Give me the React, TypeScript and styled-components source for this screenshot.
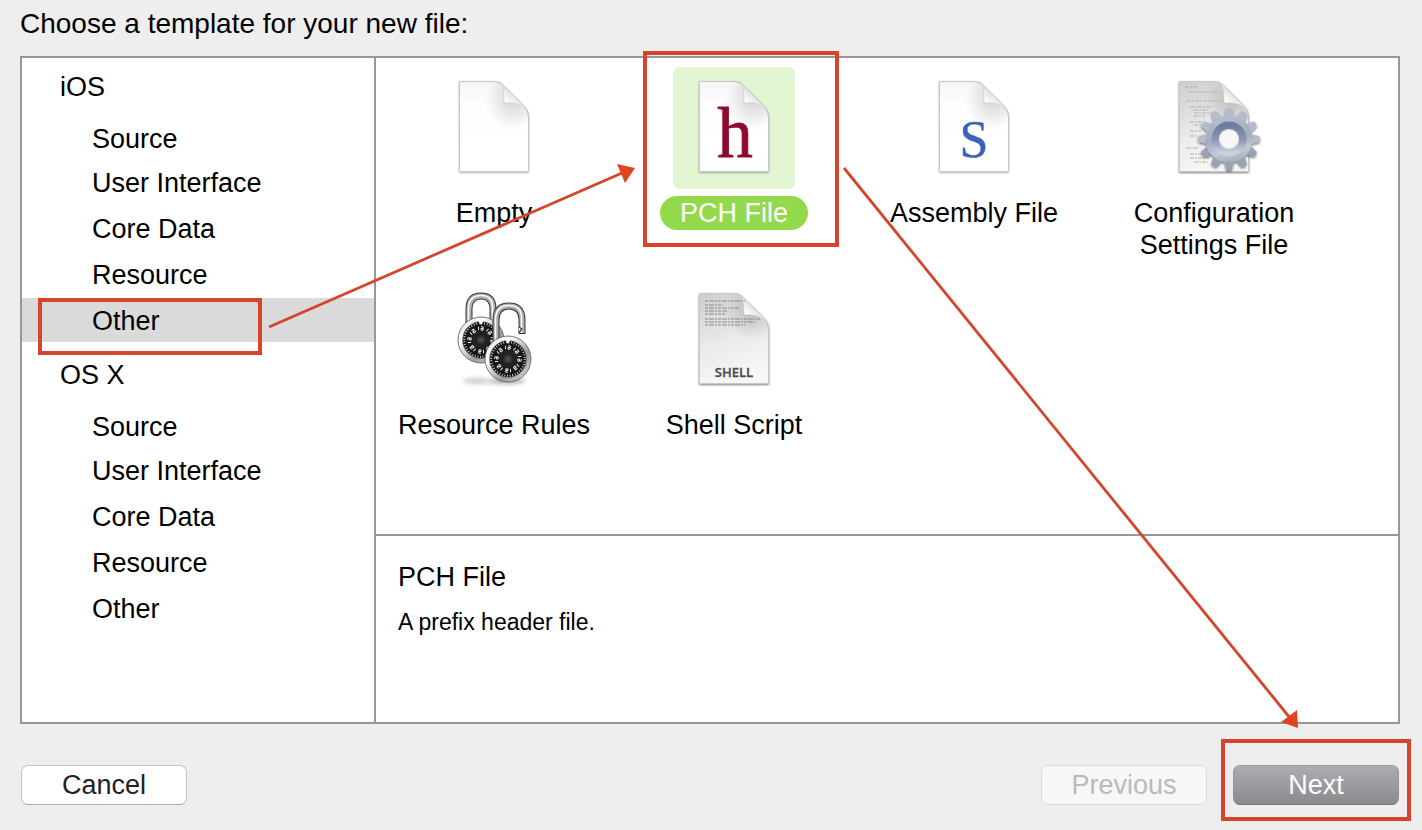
import React from "react";
import styled, { createGlobalStyle, css } from "styled-components";

const RED = "#d5452b";

const GlobalStyle = createGlobalStyle`
  *, *::before, *::after { box-sizing: border-box; }
  body {
    margin: 0;
    background: #eeeeee;
    color: #000;
    font-family: "Liberation Sans", Arial, sans-serif;
    font-size: 27px;
    line-height: 32px;
  }
  button { font: inherit; color: inherit; }
`;

const Sheet = styled.main`
  position: relative;
  display: flex;
  flex-direction: column;
  min-height: 100vh;
  padding: 0 22px 25px 20px;
  overflow: hidden;
`;

const Heading = styled.h1`
  margin: 0;
  padding: 8px 0 16px;
  font-size: 28px;
  font-weight: 400;
  line-height: 32px;
`;

const Panel = styled.div`
  display: flex;
  flex: 1;
  border: 2px solid #979797;
  background: #fff;
`;

const Sidebar = styled.nav`
  flex: none;
  width: 354px;
  border-right: 2px solid #979797;
`;

const Group = styled.section`
  & + & { margin-top: 4px; }
`;

const GroupTitle = styled.h2`
  margin: 0;
  padding-left: 38px;
  font-size: 27px;
  font-weight: 400;
  line-height: 58px;
`;

const List = styled.ul`
  margin: 0;
  padding: 0;
  list-style: none;
`;

const ListItem = styled.li`
  position: relative;
  & + & + & { margin-top: 2px; }
`;

const CategoryButton = styled.button<{ $selected: boolean }>`
  display: block;
  width: 100%;
  height: 44px;
  padding: 2px 0 0 70px;
  border: 0;
  background: ${(p) => (p.$selected ? "#dadada" : "transparent")};
  line-height: 42px;
  text-align: left;
`;

const Content = styled.div`
  display: flex;
  flex: 1;
  flex-direction: column;
  min-width: 0;
`;

const Templates = styled.div`
  display: grid;
  flex: 1;
  grid-template-columns: repeat(4, 236px);
  grid-auto-rows: 196px;
  align-content: start;
  gap: 16px 4px;
  padding: 9px 0;
`;

const Cell = styled.div`
  position: relative;
`;

const TemplateButton = styled.button`
  display: flex;
  flex-direction: column;
  align-items: center;
  gap: 7px;
  width: 100%;
  padding: 0;
  border: 0;
  background: none;
`;

const IconTile = styled.span<{ $selected: boolean }>`
  width: 122px;
  height: 122px;
  border-radius: 7px;
  background: ${(p) => (p.$selected ? "#e2f5d3" : "transparent")};
  svg { display: block; }
`;

const Label = styled.span<{ $selected: boolean }>`
  max-width: 196px;
  padding: 1px 0;
  ${(p) =>
    p.$selected &&
    css`
      padding: 1px 20px;
      border-radius: 17px;
      background: #92da4c;
      color: #fff;
    `}
`;

const Detail = styled.section`
  height: 188px;
  padding: 25px 22px;
  border-top: 2px solid #979797;
`;

const DetailTitle = styled.h2`
  margin: 0 0 15px;
  font-size: 27px;
  font-weight: 400;
  line-height: 32px;
`;

const DetailText = styled.p`
  margin: 0;
  font-size: 23px;
  line-height: 28px;
`;

const Footer = styled.footer`
  display: flex;
  justify-content: space-between;
  margin-top: 41px;
  padding: 0 1px;
`;

const Steps = styled.div`
  display: flex;
  gap: 26px;
`;

const Anchor = styled.div`
  position: relative;
`;

const PushButton = styled.button<{ $primary?: boolean }>`
  display: block;
  width: 166px;
  height: 40px;
  padding: 0;
  border: 1px solid #c3c3c3;
  border-bottom-color: #adadad;
  border-radius: 7px;
  background: #fff;
  color: #222;
  line-height: 36px;
  text-align: center;

  &:disabled {
    border-color: #d9d9d9;
    background: #f7f7f7;
    color: #bababa;
  }

  ${(p) =>
    p.$primary &&
    css`
      border-color: #9b9b9f #939397 #77777b;
      background: linear-gradient(#adadb2, #89898e);
      color: #fff;
    `}
`;

const Marker = styled.span<{ $inset: string }>`
  position: absolute;
  inset: ${(p) => p.$inset};
  z-index: 1;
  border: 4px solid ${RED};
  pointer-events: none;
`;

const Arrows = styled.svg`
  position: absolute;
  top: 0;
  left: 0;
  z-index: 2;
  pointer-events: none;
`;

const PAGE = "M26.5 14.5H60C66 14.5 70 18 75 23L88 36C93 41 95.5 44 95.5 51V104.5H26.5Z";

function Page({ id, grey = false, children }: { id: string; grey?: boolean; children?: React.ReactNode }) {
  return (
    <svg width="122" height="122" viewBox="0 0 122 122" aria-hidden="true">
      <defs>
        <linearGradient id={`${id}-paper`} x1="0" y1="0" x2={grey ? "0.3" : "0"} y2="1">
          <stop offset="0" stopColor={grey ? "#cdcdcd" : "#f4f4f4"} />
          <stop offset={grey ? "0.6" : "0.25"} stopColor={grey ? "#ebebeb" : "#fefefe"} />
          <stop offset="1" stopColor={grey ? "#f6f6f6" : "#ffffff"} />
        </linearGradient>
        <linearGradient id={`${id}-fold`} x1="0" y1="1" x2="0.6" y2="0.3">
          <stop offset="0" stopColor="#ffffff" />
          <stop offset="0.6" stopColor="#fafafa" />
          <stop offset="1" stopColor="#d4d4d4" />
        </linearGradient>
        <radialGradient id={`${id}-shade`} gradientUnits="userSpaceOnUse" cx="80" cy="34" r="28">
          <stop offset="0" stopColor="#000" stopOpacity="0.16" />
          <stop offset="1" stopColor="#000" stopOpacity="0" />
        </radialGradient>
        <filter id={`${id}-drop`} x="-10%" y="-10%" width="120%" height="120%">
          <feDropShadow dx="0" dy="1" stdDeviation="1" floodOpacity={grey ? "0.5" : "0.3"} />
        </filter>
      </defs>
      <path d={PAGE} fill={`url(#${id}-paper)`} stroke="#c8c8c8" filter={`url(#${id}-drop)`} />
      <path d={PAGE} fill={`url(#${id}-shade)`} />
      <path d="M64 14.5C70 16 71 24 71 36C83 35 92 38 95.5 48C94 42 91 39 88 36L75 23C70 18 68 15 64 14.5Z" fill={`url(#${id}-fold)`} stroke="#c4c4c4" strokeWidth="0.6" />
      {children}
    </svg>
  );
}

const EmptyIcon = () => <Page id="empty" />;

const HeaderIcon = () => (
  <Page id="pch">
    <text x="62" y="90" textAnchor="middle" fontFamily="Liberation Serif, serif" fontSize="71" fill="#8f0a2c" stroke="#8f0a2c" strokeWidth="0.8">h</text>
  </Page>
);

const AssemblyIcon = () => (
  <Page id="asm">
    <text x="61" y="90" textAnchor="middle" fontFamily="Liberation Serif, serif" fontSize="52" fill="#3a62b8" stroke="#3a62b8" strokeWidth="0.4">S</text>
  </Page>
);

const CODE = [
  [32, 20, 13], [36, 25, 30], [34, 34, 35], [37, 40, 22], [41, 43, 14], [41, 46, 18],
  [41, 49, 11], [37, 55, 12], [41, 58, 9], [37, 64, 11], [37, 69, 7], [33, 81, 12],
  [37, 87, 16], [37, 91, 20], [41, 95, 14],
];

function ConfigIcon() {
  const teeth = Array.from({ length: 12 }, (_, i) => i * 30);
  return (
    <Page id="config" grey>
      {CODE.map(([x, y, w]) => (
        <path key={y} d={`M${x} ${y}h${w}`} stroke="#b0b0b0" strokeWidth="1" strokeDasharray="4 1 2 1" />
      ))}
      <defs>
        <linearGradient id="gear-body" gradientUnits="userSpaceOnUse" x1="-6" y1="-30" x2="6" y2="30">
          <stop offset="0" stopColor="#b9c0cf" />
          <stop offset="0.5" stopColor="#a3adc0" />
          <stop offset="0.7" stopColor="#c3c9d4" />
          <stop offset="1" stopColor="#8f9aad" />
        </linearGradient>
        <linearGradient id="gear-ring" x1="0" y1="0" x2="0" y2="1">
          <stop offset="0" stopColor="#6c7d9b" />
          <stop offset="0.55" stopColor="#8c9ab5" />
          <stop offset="1" stopColor="#ccd2dd" />
        </linearGradient>
        <filter id="gear-drop" x="-20%" y="-20%" width="140%" height="140%">
          <feDropShadow dx="0" dy="1.5" stdDeviation="0.9" floodOpacity="0.55" />
        </filter>
      </defs>
      <g transform="translate(76 72)">
        <g filter="url(#gear-drop)">
          {teeth.map((a) => (
            <path key={a} d="M-5 -21L-3 -30.5Q0 -31.5 3 -30.5L5 -21Z" fill={a > 90 && a < 270 ? "#98a2b4" : "#b4bccb"} transform={`rotate(${a})`} />
          ))}
          <path fill="url(#gear-body)" fillRule="evenodd" d="M0 -23.5A23.5 23.5 0 1 1 0 23.5A23.5 23.5 0 1 1 0 -23.5ZM0 -9.5A9.5 9.5 0 1 0 0 9.5A9.5 9.5 0 1 0 0 -9.5Z" />
        </g>
        <circle r="13.5" fill="none" stroke="url(#gear-ring)" strokeWidth="8" />
        <circle r="9.5" fill="#f7f7f7" stroke="#dfe3ea" strokeWidth="1.2" />
      </g>
    </Page>
  );
}

const SCRIPT = [[32, 22, 40], [32, 26, 18], [32, 29, 34], [32, 32, 22], [32, 35, 20], [32, 40, 56], [32, 43, 50], [32, 46, 40]];

const ShellIcon = () => (
  <Page id="shell" grey>
    {SCRIPT.map(([x, y, w]) => (
      <path key={y} d={`M${x} ${y}h${w}`} stroke="#888" strokeWidth="1" strokeDasharray="3 1 5 1 2 1" />
    ))}
    <text x="61" y="98" textAnchor="middle" fontFamily="Open Sans, sans-serif" fontWeight="600" fontSize="13" fill="#4c4c4c" stroke="#4c4c4c" strokeWidth="0.3">SHELL</text>
  </Page>
);

function Dial({ x, y }: { x: number; y: number }) {
  return (
    <g transform={`translate(${x} ${y})`}>
      <circle r="23" fill="url(#lock-rim)" stroke="#555" strokeWidth="0.8" />
      <circle r="18.5" fill="#161616" stroke="#777" strokeWidth="0.6" />
      <circle r="16.8" fill="none" stroke="#eee" strokeWidth="2" strokeDasharray="0.8 1.839" />
      {[45, 90, 135, 180, 225, 270, 315, 360].map((a) => (
        <path key={a} d="M-2.5 -13.2v3.4M0 -13.2h2.2v3.4h-2.2v-1.7h2" fill="none" stroke="#e6e6e6" strokeWidth="1" transform={`rotate(${a})`} />
      ))}
      <circle r="8.5" fill="#262626" />
      <circle r="6.5" fill="url(#lock-knob)" />
      <path d="M-2.5 -19h5l-2.5 4z" fill="#fff" />
    </g>
  );
}

function LocksIcon() {
  return (
    <svg width="122" height="122" viewBox="0 0 122 122" aria-hidden="true">
      <defs>
        <linearGradient id="lock-rim" x1="0" y1="0" x2="1" y2="1">
          <stop offset="0" stopColor="#d8d8d8" />
          <stop offset="0.3" stopColor="#ffffff" />
          <stop offset="0.65" stopColor="#9a9a9a" />
          <stop offset="1" stopColor="#e6e6e6" />
        </linearGradient>
        <radialGradient id="lock-knob">
          <stop offset="0" stopColor="#555" />
          <stop offset="1" stopColor="#151515" />
        </radialGradient>
        <filter id="lock-blur" x="-20%" y="-100%" width="140%" height="300%">
          <feGaussianBlur stdDeviation="2" />
        </filter>
      </defs>
      <ellipse cx="44" cy="102" rx="14" ry="3" fill="#ccc" filter="url(#lock-blur)" />
      <ellipse cx="74" cy="102" rx="18" ry="3" fill="#aaa" filter="url(#lock-blur)" />
      <g fill="none">
        <path d="M36 52V30Q36 17 48 17T60 30V52" stroke="#383838" strokeWidth="7" />
        <path d="M36 52V30Q36 17 48 17T60 30V52" stroke="#ababab" strokeWidth="5" />
        <path d="M35.5 52V30Q35.5 16.5 48 16.5T59.5 30V52" stroke="#fafafa" strokeWidth="1.6" />
      </g>
      <Dial x={48} y={61} />
      <g fill="none">
        <path d="M63 67V41Q63 27 76 27T89 41V55" stroke="#383838" strokeWidth="7" />
        <path d="M63 67V41Q63 27 76 27T89 41V54" stroke="#ababab" strokeWidth="5" />
        <path d="M62.500 67V41Q62.500 26.500 76 26.500T88.500 41V54" stroke="#fafafa" strokeWidth="1.6" />
        <path d="M86 48l3 2-3 3" stroke="#333" strokeWidth="1.2" fill="#fff" />
      </g>
      <Dial x={75} y={80} />
    </svg>
  );
}

const CATEGORIES = ["Source", "User Interface", "Core Data", "Resource", "Other"];
const PLATFORMS = ["iOS", "OS X"];

const TEMPLATES = [
  { name: "Empty", icon: <EmptyIcon /> },
  { name: "PCH File", icon: <HeaderIcon /> },
  { name: "Assembly File", icon: <AssemblyIcon /> },
  { name: "Configuration Settings File", icon: <ConfigIcon /> },
  { name: "Resource Rules", icon: <LocksIcon /> },
  { name: "Shell Script", icon: <ShellIcon /> },
];

export default function App() {
  return (
    <>
      <GlobalStyle />
      <Sheet>
        <Heading>Choose a template for your new file:</Heading>
        <Panel>
          <Sidebar aria-label="Template categories">
            {PLATFORMS.map((platform) => (
              <Group key={platform}>
                <GroupTitle>{platform}</GroupTitle>
                <List>
                  {CATEGORIES.map((category) => {
                    const selected = platform === "iOS" && category === "Other";
                    return (
                      <ListItem key={category}>
                        <CategoryButton type="button" $selected={selected}>{category}</CategoryButton>
                        {selected && <Marker $inset="0 112px -13px 16px" />}
                      </ListItem>
                    );
                  })}
                </List>
              </Group>
            ))}
          </Sidebar>
          <Content>
            <Templates>
              {TEMPLATES.map(({ name, icon }) => {
                const selected = name === "PCH File";
                return (
                  <Cell key={name}>
                    <TemplateButton type="button" aria-pressed={selected}>
                      <IconTile $selected={selected}>{icon}</IconTile>
                      <Label $selected={selected}>{name}</Label>
                    </TemplateButton>
                    {selected && <Marker $inset="-16px 13px 16px 27px" />}
                  </Cell>
                );
              })}
            </Templates>
            <Detail>
              <DetailTitle>PCH File</DetailTitle>
              <DetailText>A prefix header file.</DetailText>
            </Detail>
          </Content>
        </Panel>
        <Footer>
          <PushButton type="button">Cancel</PushButton>
          <Steps>
            <PushButton type="button" disabled>Previous</PushButton>
            <Anchor>
              <PushButton type="button" $primary>Next</PushButton>
              <Marker $inset="-26px -12px -16px -12px" />
            </Anchor>
          </Steps>
        </Footer>
        <Arrows width="1422" height="830" viewBox="0 0 1422 830" aria-hidden="true">
          <g stroke={RED} strokeWidth="2.8">
            <path d="M269 327L622 173" />
            <path d="M844 168L1290 718" />
          </g>
          <g fill="#e04420">
            <path d="M635 168L617 164L625 183Z" />
            <path d="M1298 728L1281 722L1297 710Z" />
          </g>
        </Arrows>
      </Sheet>
    </>
  );
}
